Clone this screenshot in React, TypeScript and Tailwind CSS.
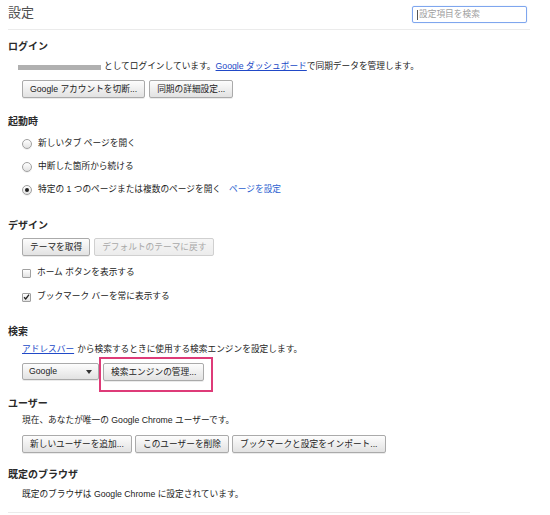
import React from 'react';

const font = { fontFamily: '"Liberation Sans", "Noto Sans CJK JP", sans-serif' };

function Btn({ children, disabled }: { children: React.ReactNode; disabled?: boolean }) {
  return (
    <button
      className={
        disabled
          ? 'h-[18px] px-[7px] text-[8.7px] leading-none rounded-[2px] border border-[#d0d0d0] bg-linear-to-b from-[#f6f6f6] to-[#ececec] text-[#a8a8a8]'
          : 'h-[18px] px-[7px] text-[8.7px] leading-none rounded-[2px] border border-[#aaaaaa] bg-linear-to-b from-[#fdfdfd] to-[#e2e2e2] text-[#222] shadow-[0_1px_0_rgba(0,0,0,0.08)]'
      }
    >
      {children}
    </button>
  );
}

function Heading({ children, className = '' }: { children: React.ReactNode; className?: string }) {
  return <div className={`h-[14px] flex items-center text-[10px] font-bold text-[#2a2a2a] ${className}`}>{children}</div>;
}

function Radio({ checked }: { checked?: boolean }) {
  return (
    <span className="w-[10px] h-[10px] rounded-full border border-[#a0a0a0] bg-linear-to-b from-[#ffffff] to-[#e2e2e2] shadow-[0_1px_0_rgba(0,0,0,0.06)] flex items-center justify-center">
      {checked && <span className="w-[4px] h-[4px] rounded-full bg-[#222]" />}
    </span>
  );
}

function Check({ checked }: { checked?: boolean }) {
  return (
    <span className="w-[9px] h-[9px] rounded-[1px] border border-[#a0a0a0] bg-linear-to-b from-[#ffffff] to-[#e2e2e2] flex items-center justify-center">
      {checked && (
        <svg width="8" height="8" viewBox="0 0 8 8">
          <path d="M1.2 4.2 L3.1 6.2 L6.9 1.2" fill="none" stroke="#222" strokeWidth="1.5" />
        </svg>
      )}
    </span>
  );
}

export default function App() {
  return (
    <div className="w-[550px] h-[515px] bg-white overflow-hidden pl-[8px] pr-[20px] text-[#222]" style={font}>
      {/* header */}
      <div className="h-[30px] flex items-center justify-between border-b border-[#ebebeb]">
        <div className="text-[13px] text-[#505050] -mt-[3px]">設定</div>
        <div className="mr-[3px] w-[115px] h-[17px] border border-[#7fa6ee] rounded-[2px] flex items-center pl-[4px] text-[8.7px] text-[#a0a0a0] shadow-[0_0_1px_#9bbcf5]">
          <span className="w-px h-[10px] bg-[#555] mr-[1px]" />
          設定項目を検索
        </div>
      </div>

      {/* ログイン */}
      <Heading className="mt-[9px]">ログイン</Heading>
      <div className="ml-[10px] mt-[8px] h-[12px] flex items-center text-[8.7px] whitespace-nowrap">
        <span className="w-[83px] h-[5px] bg-[#b0b0b0] blur-[0.6px] mr-[3px]" />
        <span>としてログインしています。</span>
        <a className="text-[#2149c7] underline">Google ダッシュボード</a>
        <span>で同期データを管理します。</span>
      </div>
      <div className="ml-[14px] mt-[7px] flex gap-[4px]">
        <Btn>Google アカウントを切断...</Btn>
        <Btn>同期の詳細設定...</Btn>
      </div>

      {/* 起動時 */}
      <Heading className="mt-[16px]">起動時</Heading>
      <div className="ml-[14px] mt-[8px] flex flex-col gap-[7px] text-[8.7px]">
        <div className="h-[16px] flex items-center gap-[6px]">
          <Radio />
          <span>新しいタブ ページを開く</span>
        </div>
        <div className="h-[16px] flex items-center gap-[6px]">
          <Radio />
          <span>中断した箇所から続ける</span>
        </div>
        <div className="h-[16px] flex items-center gap-[6px]">
          <Radio checked />
          <span>特定の 1 つのページまたは複数のページを開く</span>
          <a className="ml-[2px] text-[#2c5fd0]">ページを設定</a>
        </div>
      </div>

      {/* デザイン */}
      <Heading className="mt-[20px]">デザイン</Heading>
      <div className="ml-[14px] mt-[6px] flex gap-[4px]">
        <Btn>テーマを取得</Btn>
        <Btn disabled>デフォルトのテーマに戻す</Btn>
      </div>
      <div className="ml-[14px] mt-[9px] flex flex-col gap-[8px] text-[8.7px]">
        <div className="h-[16px] flex items-center gap-[6px]">
          <Check />
          <span>ホーム ボタンを表示する</span>
        </div>
        <div className="h-[16px] flex items-center gap-[6px]">
          <Check checked />
          <span>ブックマーク バーを常に表示する</span>
        </div>
      </div>

      {/* 検索 */}
      <Heading className="mt-[19px]">検索</Heading>
      <div className="ml-[14px] mt-[6px] h-[12px] flex items-center text-[8.7px] whitespace-nowrap">
        <a className="text-[#2149c7] underline mr-[3px]">アドレスバー</a>
        <span>から検索するときに使用する検索エンジンを設定します。</span>
      </div>
      <div className="relative ml-[14px] mt-[7px] flex gap-[4px]">
        <div className="h-[17px] w-[77px] px-[6px] rounded-[2px] border border-[#aaaaaa] bg-linear-to-b from-[#fdfdfd] to-[#e2e2e2] flex items-center justify-between text-[8.7px] shadow-[0_1px_0_rgba(0,0,0,0.08)]">
          <span>Google</span>
          <svg width="6" height="4" viewBox="0 0 6 4">
            <path d="M0 0 H6 L3 4 Z" fill="#333" />
          </svg>
        </div>
        <Btn>検索エンジンの管理...</Btn>
        <div className="absolute left-[77px] -top-[6px] w-[114px] h-[35px] border-2 border-[#de3b78]" />
      </div>

      {/* ユーザー */}
      <Heading className="mt-[15px]">ユーザー</Heading>
      <div className="ml-[14px] mt-[5px] h-[12px] flex items-center text-[8.7px] whitespace-nowrap">
        現在、あなたが唯一の Google Chrome ユーザーです。
      </div>
      <div className="ml-[14px] mt-[8px] flex gap-[3px]">
        <Btn>新しいユーザーを追加...</Btn>
        <Btn>このユーザーを削除</Btn>
        <Btn>ブックマークと設定をインポート...</Btn>
      </div>

      {/* 既定のブラウザ */}
      <Heading className="mt-[14px]">既定のブラウザ</Heading>
      <div className="ml-[14px] mt-[8px] h-[12px] flex items-center text-[8.7px] whitespace-nowrap">
        既定のブラウザは Google Chrome に設定されています。
      </div>
      <div className="mt-[11px] w-[462px] border-t border-[#ebebeb]" />
    </div>
  );
}
